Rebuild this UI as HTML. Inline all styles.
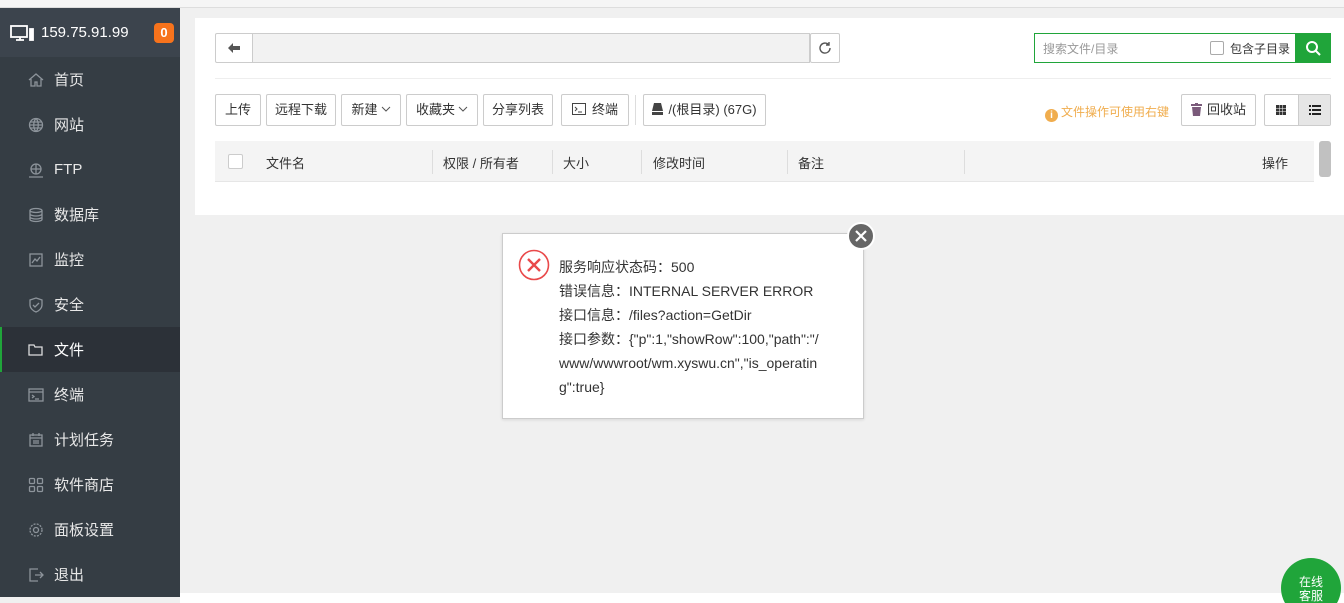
<!DOCTYPE html>
<html><head><meta charset="utf-8"><style>
*{box-sizing:border-box;margin:0;padding:0}
html,body{width:1344px;height:603px;overflow:hidden}
body{background:#f0f0f0;font-family:"Liberation Sans","Noto Sans CJK SC",sans-serif;font-size:13px;color:#333;position:relative}
.top{position:absolute;left:0;top:0;width:1344px;height:8px;background:#f5f5f5;border-bottom:1px solid #ddd}
.side{position:absolute;left:0;top:8px;width:180px;height:589px;background:#353d44}
.hd{height:49px;background:#3c444d;color:#fff;font-size:15px;display:flex;align-items:center;padding-left:10px}
.hd .ip{margin-left:7px}
.badge{position:absolute;left:154px;top:15px;width:20px;height:20px;background:#f7731c;border-radius:4px;color:#fff;font-weight:bold;font-size:13px;text-align:center;line-height:20px}
.item{height:45px;display:flex;align-items:center;padding-left:28px;color:#e8e8e8;font-size:15px}
.item svg{width:16px;height:16px;margin-right:10px;stroke:#8d949b;fill:none;stroke-width:1.3}
.item.act{background:#2c3138;border-left:2px solid #20a53a;padding-left:26px;color:#fff}
.item.act svg{stroke:#ddd}
.panel{position:absolute;left:195px;top:18px;width:1149px;height:197px;background:#fff}
.btn{position:absolute;height:32px;border:1px solid #ccc;border-radius:2px;background:#fff;font-size:13px;line-height:30px;text-align:center;color:#333}
.chev{width:10px;height:6px;vertical-align:2px;margin-left:3px}
.th{position:absolute;top:141px;left:215px;width:1099px;height:41px;background:#f4f4f4;border-bottom:1px solid #e6e6e6}
.th span{position:absolute;top:12px;font-size:13px}
.th i{position:absolute;top:9px;width:1px;height:24px;background:#ddd}
.dlg{position:absolute;left:502px;top:233px;width:362px;height:186px;background:#fff;border:1px solid #ccc;box-shadow:0 1px 3px rgba(0,0,0,.1)}
.dlg .t{position:absolute;left:56px;top:21px;font-size:14px;line-height:24px;color:#333;white-space:nowrap}
</style></head><body>
<div class="top"></div>
<div class="side">
<div class="hd"><svg width="24" height="18" viewBox="0 0 24 18" fill="none" stroke="#fff" stroke-width="1.8"><rect x="1" y="2" width="16" height="11"/><path d="M6 16h8M10 13v3"/><rect x="20" y="5" width="3" height="11" fill="#fff"/></svg><span class="ip">159.75.91.99</span></div>
<div class="badge">0</div>
<div class="item"><svg viewBox="0 0 16 16"><path d="M1 8L8 2l7 6M3 7v7h4v-4h2v4h4V7"/></svg>首页</div>
<div class="item"><svg viewBox="0 0 16 16"><circle cx="8" cy="8" r="6.5"/><path d="M1.5 8h13M8 1.5c-3 3-3 10 0 13M8 1.5c3 3 3 10 0 13M2.5 5h11M2.5 11h11"/></svg>网站</div>
<div class="item"><svg viewBox="0 0 16 16"><circle cx="8" cy="7" r="5"/><path d="M3 7h10M8 2v10M1 15h14"/></svg>FTP</div>
<div class="item"><svg viewBox="0 0 16 16"><ellipse cx="8" cy="3.5" rx="6" ry="2"/><path d="M2 3.5v9c0 1 3 2 6 2s6-1 6-2v-9M2 7c0 1 3 2 6 2s6-1 6-2M2 10c0 1 3 2 6 2s6-1 6-2"/></svg>数据库</div>
<div class="item"><svg viewBox="0 0 16 16"><rect x="2" y="2" width="12" height="12"/><path d="M4 11l3-4 2 2 3-4"/></svg>监控</div>
<div class="item"><svg viewBox="0 0 16 16"><path d="M8 1l6 2v5c0 3-3 6-6 7-3-1-6-4-6-7V3z"/><path d="M5 8l2 2 4-4"/></svg>安全</div>
<div class="item act"><svg viewBox="0 0 16 16"><path d="M1 3h5l1 2h7v8H1z"/></svg>文件</div>
<div class="item"><svg viewBox="0 0 16 16"><rect x="1" y="2" width="14" height="12"/><path d="M1 5h14M4 8l2 1.5L4 11M7 12h4"/></svg>终端</div>
<div class="item"><svg viewBox="0 0 16 16"><rect x="2" y="3" width="12" height="11"/><path d="M2 6h12M5 1v3M11 1v3M5 9h6M5 11h6"/></svg>计划任务</div>
<div class="item"><svg viewBox="0 0 16 16"><rect x="1.5" y="1.5" width="5" height="5" rx="1"/><rect x="9.5" y="1.5" width="5" height="5" rx="1"/><rect x="1.5" y="9.5" width="5" height="5" rx="1"/><rect x="9.5" y="9.5" width="5" height="5" rx="1"/></svg>软件商店</div>
<div class="item"><svg viewBox="0 0 16 16"><circle cx="8" cy="8" r="2.5"/><circle cx="8" cy="8" r="6" stroke-dasharray="2 1.2"/></svg>面板设置</div>
<div class="item"><svg viewBox="0 0 16 16"><path d="M10 2H2v12h8M7 8h8M12 5l3 3-3 3"/></svg>退出</div>
</div>
<div style="position:absolute;left:180px;top:593px;width:1164px;height:10px;background:#fff"></div>
<div class="panel"></div>
<div class="btn" style="left:215px;top:33px;width:38px;height:30px;border-radius:2px 0 0 2px"><svg width="12" height="10" viewBox="0 0 12 10" style="margin-top:9px"><path d="M0 5l5-5v3h7v4H5v3z" fill="#555"/></svg></div>
<div style="position:absolute;left:253px;top:33px;width:557px;height:30px;background:#f2f2f2;border:1px solid #ccc;border-left:none"></div>
<div class="btn" style="left:810px;top:33px;width:30px;height:30px"><svg width="14" height="14" viewBox="0 0 14 14" style="margin-top:7px" fill="none" stroke="#555" stroke-width="1.4"><path d="M12 7a5 5 0 1 1-1.5-3.5M11 1v3h-3"/></svg></div>
<div style="position:absolute;left:1034px;top:33px;width:297px;height:30px;border:1px solid #20a53a;background:#fff"></div>
<span style="position:absolute;left:1043px;top:40px;font-size:12px;color:#999">搜索文件/目录</span>
<div style="position:absolute;left:1210px;top:41px;width:14px;height:14px;border:1px solid #aaa;border-radius:2px"></div>
<span style="position:absolute;left:1230px;top:40px;font-size:12px;color:#333">包含子目录</span>
<div style="position:absolute;left:1295px;top:33px;width:36px;height:30px;background:#20a53a"><svg width="16" height="16" viewBox="0 0 16 16" style="margin:7px 10px" fill="none" stroke="#fff" stroke-width="2"><circle cx="7" cy="7" r="5"/><path d="M11 11l4 4"/></svg></div>
<div style="position:absolute;left:215px;top:78px;width:1116px;height:1px;background:#eee"></div>
<div class="btn" style="left:215px;top:94px;width:46px">上传</div>
<div class="btn" style="left:266px;top:94px;width:70px">远程下载</div>
<div class="btn" style="left:341px;top:94px;width:60px">新建<svg class="chev" viewBox="0 0 10 6" fill="none" stroke="#555"><path d="M1 1l4 4 4-4"/></svg></div>
<div class="btn" style="left:406px;top:94px;width:72px">收藏夹<svg class="chev" viewBox="0 0 10 6" fill="none" stroke="#555"><path d="M1 1l4 4 4-4"/></svg></div>
<div class="btn" style="left:483px;top:94px;width:70px">分享列表</div>
<div class="btn" style="left:561px;top:94px;width:68px"><svg width="14" height="12" viewBox="0 0 14 12" style="vertical-align:-1px;margin-right:6px" fill="none" stroke="#444"><rect x=".5" y=".5" width="13" height="11"/><path d="M3 4l2 2-2 2M6 9h4"/></svg>终端</div>
<div style="position:absolute;left:635px;top:95px;width:1px;height:30px;background:#ddd"></div>
<div class="btn" style="left:643px;top:94px;width:123px"><svg width="11" height="12" viewBox="0 0 11 12" style="vertical-align:-1px;margin-right:5px"><path d="M2 0h7l2 8H0z M0 9h11v3H0z" fill="#444"/></svg>/(根目录) (67G)</div>
<span style="position:absolute;left:1045px;top:103px;font-size:12px;color:#f0ad4e"><span style="display:inline-block;width:13px;height:13px;border-radius:50%;background:#f0ad4e;color:#fff;font-size:10px;text-align:center;line-height:13px;font-weight:bold;vertical-align:-2px;margin-right:3px">i</span>文件操作可使用右键</span>
<div class="btn" style="left:1181px;top:94px;width:75px"><svg width="11" height="13" viewBox="0 0 11 13" style="vertical-align:-2px;margin-right:5px" fill="#7a5a7a"><rect x="0" y="1" width="11" height="2"/><rect x="4" y="0" width="3" height="1"/><path d="M1 4h9l-1 9H2z"/></svg>回收站</div>
<div class="btn" style="left:1264px;top:94px;width:67px;overflow:hidden"><div style="position:absolute;left:33px;top:0;width:34px;height:30px;background:#e6e6e6;border-left:1px solid #ccc"></div><svg width="10" height="10" viewBox="0 0 10 10" style="position:absolute;left:11px;top:10px" fill="#333"><rect width="3" height="3"/><rect x="3.5" width="3" height="3"/><rect x="7" width="3" height="3"/><rect y="3.5" width="3" height="3"/><rect x="3.5" y="3.5" width="3" height="3"/><rect x="7" y="3.5" width="3" height="3"/><rect y="7" width="3" height="3"/><rect x="3.5" y="7" width="3" height="3"/><rect x="7" y="7" width="3" height="3"/></svg><svg width="12" height="10" viewBox="0 0 12 10" style="position:absolute;left:44px;top:10px" fill="#222"><rect width="2" height="2"/><rect x="3" width="9" height="2"/><rect y="4" width="2" height="2"/><rect x="3" y="4" width="9" height="2"/><rect y="8" width="2" height="2"/><rect x="3" y="8" width="9" height="2"/></svg></div>
<div class="th">
<div style="position:absolute;left:13px;top:13px;width:15px;height:15px;border:1px solid #ccc;background:#fff;border-radius:2px"></div>
<span style="left:51px">文件名</span><i style="left:217px"></i>
<span style="left:228px">权限 / 所有者</span><i style="left:337px"></i>
<span style="left:348px">大小</span><i style="left:426px"></i>
<span style="left:438px">修改时间</span><i style="left:572px"></i>
<span style="left:583px">备注</span><i style="left:749px"></i>
<span style="left:1047px">操作</span>
</div>
<div style="position:absolute;left:1319px;top:141px;width:12px;height:36px;background:#c1c1c1;border-radius:3px"></div>
<div class="dlg">
<svg width="32" height="32" viewBox="0 0 32 32" style="position:absolute;left:15px;top:15px" fill="none" stroke="#e9494a" stroke-width="1.6"><circle cx="16" cy="16" r="14.5"/><path d="M10 10l12 12M22 10L10 22" stroke-width="2.4"/></svg>
<div class="t">服务响应状态码：500<br>错误信息：INTERNAL SERVER ERROR<br>接口信息：/files?action=GetDir<br>接口参数：{"p":1,"showRow":100,"path":"/<br>www/wwwroot/wm.xyswu.cn","is_operatin<br>g":true}</div>
</div>
<div style="position:absolute;left:847px;top:222px;width:28px;height:28px;border-radius:50%;background:#666;border:2px solid #fff;color:#fff;text-align:center"><svg width="12" height="12" viewBox="0 0 12 12" style="margin-top:6px" stroke="#fff" stroke-width="2.2"><path d="M1 1l10 10M11 1L1 11"/></svg></div>
<div style="position:absolute;left:1281px;top:558px;width:60px;height:45px;overflow:hidden"><div style="width:60px;height:60px;border-radius:50%;background:#20a53a;color:#fff;font-size:12px;text-align:center;padding-top:17px;line-height:14px">在线<br>客服</div></div>
</body></html>
